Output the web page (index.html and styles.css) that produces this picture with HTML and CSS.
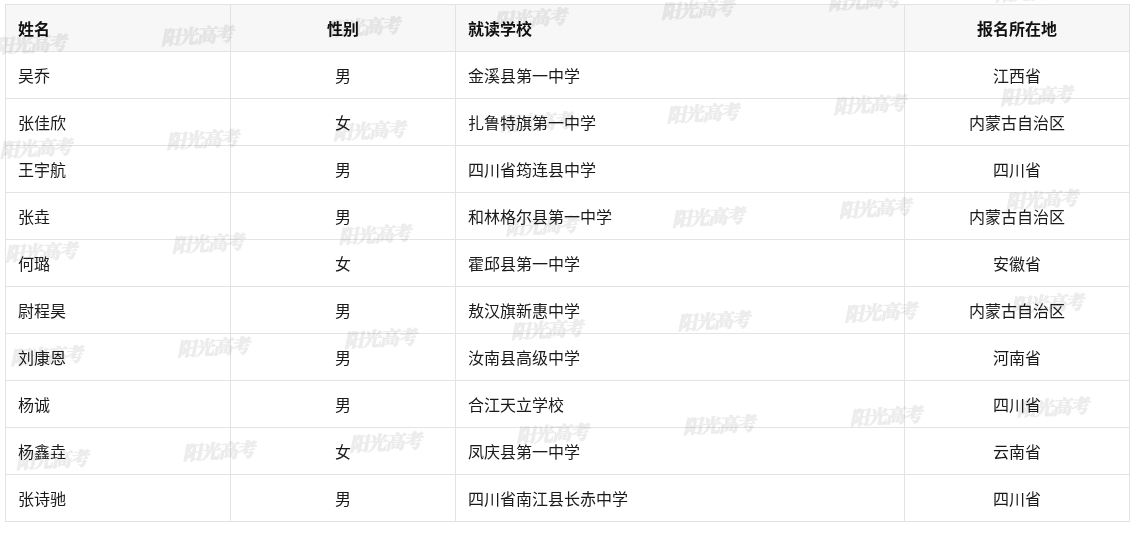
FILE: index.html
```html
<!DOCTYPE html>
<html lang="zh-CN">
<head>
<meta charset="utf-8">
<link rel="stylesheet" href="styles.css">
</head>
<body>
<div class="page">
  <table class="list">
    <colgroup>
      <col class="c-name"><col class="c-sex"><col class="c-school"><col class="c-area">
    </colgroup>
    <thead>
      <tr><th class="left">姓名</th><th>性别</th><th class="left">就读学校</th><th>报名所在地</th></tr>
    </thead>
    <tbody>
      <tr><td>吴乔</td><td class="mid">男</td><td>金溪县第一中学</td><td class="mid">江西省</td></tr>
      <tr><td>张佳欣</td><td class="mid">女</td><td>扎鲁特旗第一中学</td><td class="mid">内蒙古自治区</td></tr>
      <tr><td>王宇航</td><td class="mid">男</td><td>四川省筠连县中学</td><td class="mid">四川省</td></tr>
      <tr><td>张垚</td><td class="mid">男</td><td>和林格尔县第一中学</td><td class="mid">内蒙古自治区</td></tr>
      <tr><td>何璐</td><td class="mid">女</td><td>霍邱县第一中学</td><td class="mid">安徽省</td></tr>
      <tr><td>尉程昊</td><td class="mid">男</td><td>敖汉旗新惠中学</td><td class="mid">内蒙古自治区</td></tr>
      <tr><td>刘康恩</td><td class="mid">男</td><td>汝南县高级中学</td><td class="mid">河南省</td></tr>
      <tr><td>杨诚</td><td class="mid">男</td><td>合江天立学校</td><td class="mid">四川省</td></tr>
      <tr><td>杨鑫垚</td><td class="mid">女</td><td>凤庆县第一中学</td><td class="mid">云南省</td></tr>
      <tr><td>张诗驰</td><td class="mid">男</td><td>四川省南江县长赤中学</td><td class="mid">四川省</td></tr>
    </tbody>
  </table>
  <div class="watermark" aria-hidden="true">
    <span>阳光高考</span><span>阳光高考</span><span>阳光高考</span><span>阳光高考</span><span>阳光高考</span><span>阳光高考</span><span>阳光高考</span><span>阳光高考</span>
    <span>阳光高考</span><span>阳光高考</span><span>阳光高考</span><span>阳光高考</span><span>阳光高考</span><span>阳光高考</span><span>阳光高考</span><span>阳光高考</span>
    <span>阳光高考</span><span>阳光高考</span><span>阳光高考</span><span>阳光高考</span><span>阳光高考</span><span>阳光高考</span><span>阳光高考</span><span>阳光高考</span>
    <span>阳光高考</span><span>阳光高考</span><span>阳光高考</span><span>阳光高考</span><span>阳光高考</span><span>阳光高考</span><span>阳光高考</span><span>阳光高考</span>
    <span>阳光高考</span><span>阳光高考</span><span>阳光高考</span><span>阳光高考</span><span>阳光高考</span><span>阳光高考</span><span>阳光高考</span><span>阳光高考</span>
  </div>
</div>
</body>
</html>
```
FILE: styles.css
```css
html, body {
  margin: 0;
  padding: 0;
  background: #fff;
}
.page {
  position: relative;
  width: 1138px;
  height: 534px;
  overflow: hidden;
  padding: 4px 0 0 5px;
  box-sizing: border-box;
  font-family: "Noto Sans CJK SC", "Noto Sans", sans-serif;
  font-size: 16px;
  color: #1a1a1a;
}
.list {
  width: 1125px;
  border-collapse: collapse;
  table-layout: fixed;
  border: 1px solid #e3e3e3;
}
.c-name, .c-sex, .c-area { width: 225px; }
.c-school { width: 449px; }
.list th, .list td {
  height: 47px;
  padding: 0 12px;
  border: 1px solid #e3e3e3;
  text-align: left;
  vertical-align: middle;
  line-height: 20px;
  box-sizing: border-box;
}
.list th {
  background: #f7f7f7;
  font-weight: bold;
  text-align: center;
  color: #111;
}
.list th.left { text-align: left; }
.list td.mid { text-align: center; }
.watermark {
  position: absolute;
  left: 0;
  top: 0;
  display: grid;
  grid-template-columns: repeat(8, 167px);
  grid-auto-rows: 104px;
  transform-origin: 0 0;
  transform: rotate(-3deg) translate(-56px, -8px);
  pointer-events: none;
  mix-blend-mode: multiply;
}
.watermark span {
  display: flex;
  align-items: center;
  justify-content: center;
  font-family: "Noto Serif CJK SC", "Noto Sans CJK SC", serif;
  font-weight: 900;
  font-style: italic;
  font-size: 19px;
  color: #ececec;
  -webkit-text-stroke: 0.6px #ececec;
  letter-spacing: -1px;
}
```
